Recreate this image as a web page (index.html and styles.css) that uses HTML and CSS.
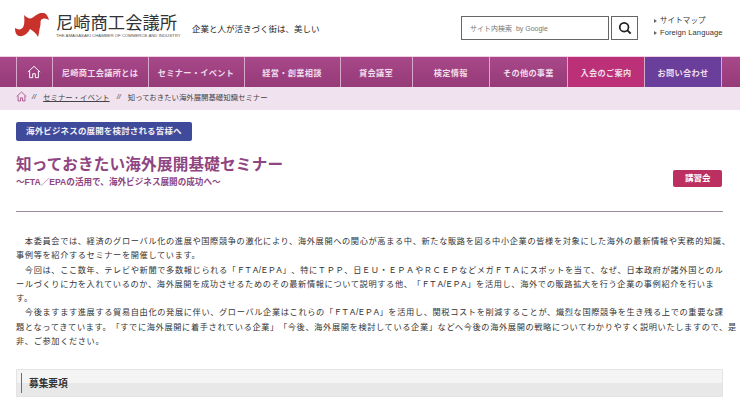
FILE: index.html
```html
<!DOCTYPE html>
<html lang="ja">
<head>
  <meta charset="utf-8">
  <title>知っておきたい海外展開基礎セミナー</title>
  <link rel="stylesheet" href="styles.css">
</head>
<body>
  <header class="top-bar">
    <a class="logo">
      <svg class="logo-mark" viewBox="0 0 34 24" width="34" height="24">
        <path fill="#c8322b" d="M0 15C2 16 4 17 6 16C9 15 10 10 9 2C12 5 15 6 17 5C21 2 25-1 29 0C32 1 33 4 34 7C31 5 28 5 26 7C25 9 26 11 25 14C24 18 24 21 23 24C21 20 18 18 15 16C13 20 9 24 4 23C1 22 0 19 0 15Z"/>
      </svg>
      <span class="logo-text">
        <span class="logo-name">尼崎商工会議所</span>
        <span class="logo-en">THE AMAGASAKI CHAMBER OF COMMERCE AND INDUSTRY</span>
      </span>
    </a>
    <p class="tagline">企業と人が活きづく街は、美しい</p>
    <form class="search">
      <input class="search-input" type="text" placeholder="サイト内検索  by Google">
      <button class="search-btn" type="button" aria-label="検索">
        <svg viewBox="0 0 16 16" width="14" height="14"><circle cx="7" cy="7" r="5" fill="none" stroke="#222" stroke-width="2"/><path d="M10.5 10.5l4 4" stroke="#222" stroke-width="2.2"/></svg>
      </button>
    </form>
    <ul class="sub-links">
      <li>サイトマップ</li>
      <li>Foreign Language</li>
    </ul>
  </header>

  <nav class="gnav">
    <a class="gnav-item home">
      <svg viewBox="0 0 16 16" width="14" height="14"><path d="M1 8l7-6.5L15 8M3 7v7.5h3.5V10h3v4.5H13V7" fill="none" stroke="#fff" stroke-width="1.1"/></svg>
    </a>
    <a class="gnav-item w96">尼崎商工会議所とは</a>
    <a class="gnav-item w96">セミナー・イベント</a>
    <a class="gnav-item w96">経営・創業相談</a>
    <a class="gnav-item w72">貸会議室</a>
    <a class="gnav-item w78">検定情報</a>
    <a class="gnav-item w78">その他の事業</a>
    <a class="gnav-item w78 join">入会のご案内</a>
    <a class="gnav-item w78 contact">お問い合わせ</a>
  </nav>

  <div class="crumbs">
    <svg class="crumb-home" viewBox="0 0 16 16" width="11" height="11"><path d="M1 8l7-6.5L15 8M3 7v7.5h3.5V10h3v4.5H13V7" fill="none" stroke="#a5437f" stroke-width="1.2"/></svg>
    <span class="sep">//</span>
    <a class="crumb-link">セミナー・イベント</a>
    <span class="sep">//</span>
    <span>知っておきたい海外展開基礎知識セミナー</span>
  </div>

  <main class="content">
    <div class="target">海外ビジネスの展開を検討される皆様へ</div>
    <div class="title-row">
      <div>
        <h1 class="title">知っておきたい海外展開基礎セミナー</h1>
        <p class="subtitle">～FTA／EPAの活用で、海外ビジネス展開の成功へ～</p>
      </div>
      <span class="tag">講習会</span>
    </div>
    <div class="body-text">
      <p>　本委員会では、経済のグローバル化の進展や国際競争の激化により、海外展開への関心が高まる中、新たな販路を図る中小企業の皆様を対象にした海外の最新情報や実務的知識、<br>事例等を紹介するセミナーを開催しています。</p>
      <p>　今回は、ここ数年、テレビや新聞で多数報じられる「<span class="fta">ＦＴＡ/ＥＰＡ</span>」、特にＴＰＰ、日ＥＵ・ＥＰＡやＲＣＥＰなどメガＦＴＡにスポットを当て、なぜ、日本政府が諸外国とのル<br>ールづくりに力を入れているのか、海外展開を成功させるためのその最新情報について説明する他、「<span class="fta">ＦＴＡ/ＥＰＡ</span>」を活用し、海外での販路拡大を行う企業の事例紹介を行いま<br>す。</p>
      <p>　今後ますます進展する貿易自由化の発展に伴い、グローバル企業はこれらの「<span class="fta">ＦＴＡ/ＥＰＡ</span>」を活用し、関税コストを削減することが、熾烈な国際競争を生き残る上での重要な課<br>題となってきています。「すでに海外展開に着手されている企業」「今後、海外展開を検討している企業」などへ今後の海外展開の戦略についてわかりやすく説明いたしますので、是<br>非、ご参加ください。</p>
    </div>
    <h2 class="section-head">募集要項</h2>
  </main>
</body>
</html>
```
FILE: styles.css
```css
body {
  margin: 0;
  padding: 0;
  background-color: #fff;
  color: #333;
  font-family: "Liberation Sans", "Noto Sans CJK JP", sans-serif;
  overflow: hidden;
}

ul, p, h1, h2 {
  margin: 0;
  padding: 0;
}

.top-bar {
  display: flex;
  align-items: center;
  height: 56px;
  padding: 0 0 0 15px;
  box-sizing: border-box;
}

.logo {
  display: flex;
  align-items: center;
  gap: 7px;
  width: 169px;
  margin-bottom: 6px;
}

.logo-text {
  display: flex;
  flex-direction: column;
}

.logo-name {
  font-size: 17.3px;
  line-height: 20px;
  color: #333;
  white-space: nowrap;
}

.logo-en {
  font-size: 4.3px;
  line-height: 5px;
  color: #555;
  white-space: nowrap;
}

.tagline {
  margin-left: 8px;
  font-size: 8.5px;
  color: #222;
  white-space: nowrap;
}

.search {
  display: flex;
  gap: 2px;
  margin-left: auto;
}

.search-input {
  width: 148px;
  height: 24px;
  padding: 0 8px;
  box-sizing: border-box;
  border: 1px solid #666;
  border-radius: 0;
  outline: none;
  font-family: inherit;
  font-size: 7px;
}

.search-input::placeholder {
  color: #777;
}

.search-btn {
  display: flex;
  align-items: center;
  justify-content: center;
  width: 27px;
  height: 24px;
  padding: 0;
  background-color: #fff;
  border: 1px solid #666;
}

.sub-links {
  width: 86px;
  margin-left: 16px;
  margin-bottom: 3px;
  list-style: none;
  font-size: 7.5px;
  line-height: 12px;
  letter-spacing: 0.1px;
  color: #333;
}

.sub-links li::before {
  content: "";
  display: inline-block;
  margin-right: 3px;
  border-left: 3px solid #666;
  border-top: 2px solid transparent;
  border-bottom: 2px solid transparent;
}

.gnav {
  display: flex;
  height: 31px;
  padding-left: 16px;
  box-sizing: border-box;
  border-top: 1px solid #f3cfe6;
  background: linear-gradient(#a8488a, #963a78);
}

.gnav-item {
  display: flex;
  align-items: center;
  justify-content: center;
  box-sizing: border-box;
  padding-bottom: 1px;
  border-left: 1px solid #d9a9cb;
  color: #f0dcea;
  font-size: 8.2px;
  font-weight: bold;
  letter-spacing: 0.3px;
  white-space: nowrap;
}

.home { width: 35.5px; }
.w96 { width: 96px; }
.w72 { width: 72px; }
.w78 { width: 77.6px; }

.join {
  background: #bb3076;
}

.contact {
  background: #6a3f9b;
  border-right: 1px solid #d9a9cb;
}

.crumbs {
  display: flex;
  align-items: center;
  gap: 7px;
  height: 23px;
  padding-left: 16px;
  padding-bottom: 4px;
  box-sizing: border-box;
  background-color: #f1e2ef;
  font-size: 7.4px;
  color: #444;
}

.crumb-home {
  margin-right: -2px;
}

.crumb-link {
  text-decoration: underline;
}

.sep {
  font-style: italic;
}

.content {
  padding: 12px 17px 0 16px;
}

.target {
  width: fit-content;
  padding: 0 10px;
  height: 19px;
  line-height: 19px;
  border-radius: 2px;
  background-color: #3f4a9a;
  color: #f0f0f6;
  font-size: 8.5px;
  font-weight: bold;
  letter-spacing: 0.15px;
}

.title-row {
  display: flex;
  justify-content: space-between;
  align-items: flex-start;
  height: 56px;
  margin-top: 14px;
  border-bottom: 1px solid #a08aa0;
}

.title {
  font-size: 15.6px;
  line-height: 20px;
  color: #8e4581;
  letter-spacing: 0.2px;
}

.subtitle {
  margin-top: 1px;
  font-size: 8.6px;
  line-height: 12px;
  font-weight: bold;
  color: #8e4581;
}

.tag {
  margin-top: 15px;
  margin-right: 1px;
  padding: 0 11.5px;
  height: 17px;
  line-height: 17px;
  border-radius: 2px;
  background-color: #bb3060;
  color: #fff;
  font-size: 8.5px;
  font-weight: bold;
}

.body-text {
  margin-top: 23px;
  font-size: 8.2px;
  line-height: 14.3px;
  letter-spacing: 0.64px;
  text-spacing-trim: space-all;
  white-space: nowrap;
  color: #333;
}

.fta {
  letter-spacing: -0.8px;
}

.section-head {
  height: 28px;
  margin-top: 20px;
  padding-left: 12px;
  line-height: 28px;
  font-size: 9.7px;
  color: #333;
  background: linear-gradient(#f4f4f4 50%, #e8e8e8 50%);
  border: 1px solid #e4e4e4;
  box-sizing: border-box;
  position: relative;
}

.section-head::before {
  content: "";
  position: absolute;
  left: 4px;
  top: 3px;
  bottom: 3px;
  width: 1px;
  background-color: #9c4f8a;
}
```
